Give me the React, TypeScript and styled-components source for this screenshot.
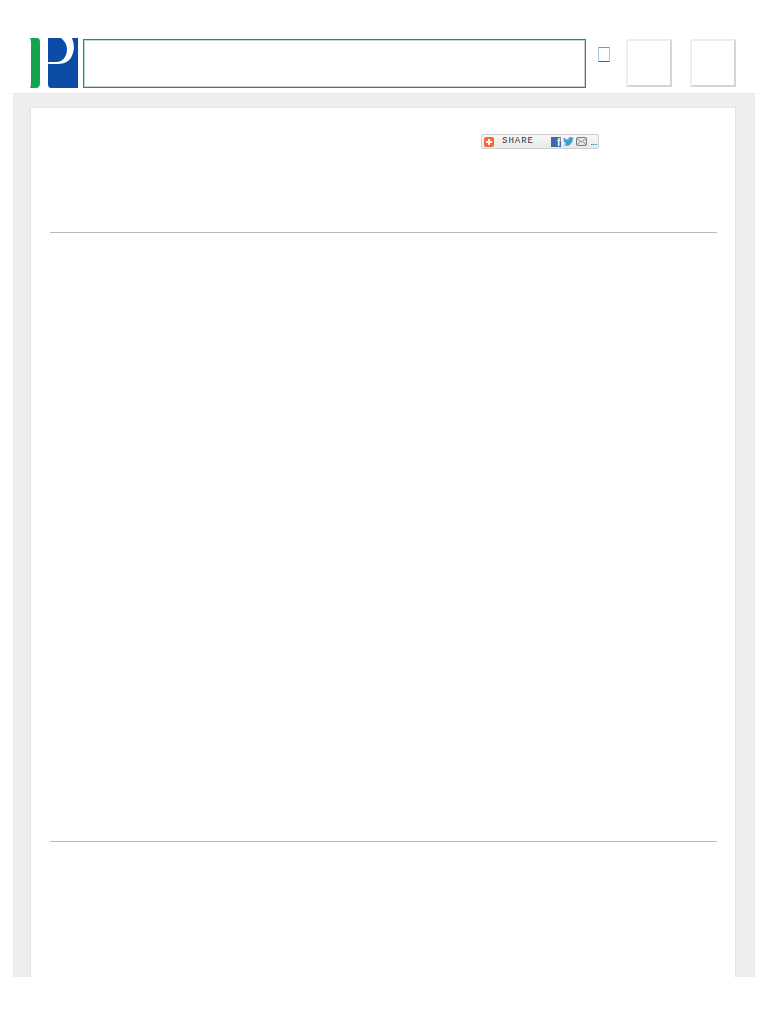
import React from 'react';
import styled, { createGlobalStyle } from 'styled-components';

const GlobalStyle = createGlobalStyle`
	html, body {
		margin: 0;
		padding: 0;
		background: #fff;
		font-family: 'Liberation Sans', Arial, sans-serif;
	}
`;

const App = () => (
	<Page>
		<GlobalStyle />
		<Header>
			<Logo viewBox="0 0 48 50" aria-label="logo">
				<path d="M0 0H7Q10 0 10 4V45Q10 50 6 50H0Q1 48 1 44V5Q1 2 0 0Z" fill="#14a44d" />
				<path d="M18 0H48V50H21Q18 50 18 46Z" fill="#0b4da6" />
				<path
					d="M31 0H42Q44 5 44 10Q43 19 38 23Q34 26 28 26H18.2V24H26Q32 24 35 19Q37.500 15 37 10Q36 4 31 0Z"
					fill="#fff"
				/>
			</Logo>
			<SearchBox />
			<SmallLink href="#" aria-label="link" />
			<IconButton />
			<IconButton />
		</Header>
		<Band>
			<Card>
				<ShareRow>
					<ShareButton>
						<PlusBadge>
							<svg width="8" height="8" viewBox="0 0 8 8">
								<path d="M3 1H5V3H7V5H5V7H3V5H1V3H3Z" fill="#fff" />
							</svg>
						</PlusBadge>
						<ShareLabel>SHARE</ShareLabel>
						<Services>
							<Facebook>f</Facebook>
							<svg width="11" height="9" viewBox="0 0 24 20">
								<path
									d="M24 2.400c-.9.4-1.800.7-2.800.8 1-.6 1.800-1.600 2.200-2.700-1 .6-2 1-3.100 1.200A4.900 4.900 0 0 0 11.900 6.200 14 14 0 0 1 1.700.9a4.900 4.900 0 0 0 1.500 6.600c-.8 0-1.600-.2-2.200-.6 0 2.400 1.700 4.400 3.900 4.900-.7.200-1.500.2-2.200.1.600 2 2.400 3.400 4.600 3.400A9.900 9.900 0 0 1 0 17.300 14 14 0 0 0 21.500 4.900c1-.7 1.900-1.500 2.500-2.500Z"
									fill="#3f9fd6"
								/>
							</svg>
							<svg width="11" height="9" viewBox="0 0 11 9">
								<rect x=".5" y=".5" width="10" height="8" rx="1" fill="#e4e4e4" stroke="#7d7d7d" />
								<path d="M1 1.500L5.500 5 10 1.500M1 8l3-3.500M10 8L7 4.500" fill="none" stroke="#8c8c8c" />
							</svg>
							<More>...</More>
						</Services>
					</ShareButton>
				</ShareRow>
				<TopRule />
				<BottomRule />
			</Card>
		</Band>
	</Page>
);

export default App;

// styles
const Page = styled.div`
	height: 1024px;
	overflow: hidden;
	padding-top: 38px;
	box-sizing: border-box;
`;

const Header = styled.header`
	display: flex;
	align-items: flex-start;
	height: 50px;
	padding-left: 30px;
`;

const Logo = styled.svg`
	display: block;
	flex: none;
	width: 48px;
	height: 50px;
`;

const SearchBox = styled.div`
	flex: none;
	box-sizing: border-box;
	width: 503px;
	height: 49px;
	margin: 1px 0 0 5px;
	background: #fff;
	border: 1px solid #0f9d47;
	box-shadow: inset 1px 1px 0 #b5e2c6, inset -1px -1px 0 #d2d2d2;
`;

const SmallLink = styled.a`
	flex: none;
	box-sizing: border-box;
	display: block;
	width: 12px;
	height: 15px;
	margin: 9px 16px 0 12px;
	border: 1px solid #a9c3ea;
	border-top-color: #6f96d8;
	border-bottom-color: #2b62c8;
`;

const IconButton = styled.button`
	flex: none;
	box-sizing: border-box;
	width: 46px;
	height: 48px;
	margin: 1px 18px 0 0;
	padding: 0;
	background: #fff;
	border: 2px solid #eeeeee;
	border-right-color: #d6d6d6;
	border-bottom-color: #d6d6d6;
`;

const Band = styled.main`
	box-sizing: border-box;
	width: 742px;
	height: 884px;
	margin: 5px 0 0 13px;
	padding: 14px 20px 0 18px;
	background: #eeeeee;
	border-top: 1px solid #e6e6e6;
`;

const Card = styled.section`
	box-sizing: border-box;
	height: 869px;
	padding: 26px 18px 0 19px;
	background: #fff;
	box-shadow: 0 -1px 0 #e6e6e6, 1px 0 0 #e4e4e4, -1px 0 0 #e4e4e4;
`;

const ShareRow = styled.div`
	display: flex;
	height: 15px;
	padding-left: 431px;
`;

const ShareButton = styled.div`
	box-sizing: border-box;
	display: flex;
	align-items: center;
	width: 118px;
	height: 15px;
	padding: 0 1px 0 2px;
	border: 1px solid #cfcfcf;
	border-radius: 2px;
	background: linear-gradient(#f7f7f7, #e9e9e9);
`;

const PlusBadge = styled.span`
	display: flex;
	align-items: center;
	justify-content: center;
	width: 10px;
	height: 10px;
	border-radius: 2px;
	background: #f0693a;
`;

const ShareLabel = styled.span`
	margin-left: 8px;
	white-space: nowrap;
	font-family: 'Liberation Mono', 'DejaVu Sans Mono', monospace;
	font-size: 9px;
	letter-spacing: 1px;
	line-height: 13px;
	color: #333;
`;

const Services = styled.div`
	display: flex;
	align-items: center;
	gap: 2px;
	margin-left: auto;
`;

const Facebook = styled.span`
	width: 10px;
	height: 10px;
	background: #3b6aa8;
	color: #fff;
	font-family: 'Liberation Sans', Arial, sans-serif;
	font-size: 10px;
	font-weight: 700;
	line-height: 11px;
	text-align: right;
	padding-right: 1px;
	box-sizing: border-box;
`;

const More = styled.span`
	margin-left: 1px;
	font-family: 'Liberation Sans', Arial, sans-serif;
	font-size: 9px;
	line-height: 12px;
	letter-spacing: -0.300px;
	color: #333;
	align-self: flex-end;
`;

const Rule = styled.hr`
	height: 1px;
	margin: 0;
	border: 0;
	background: #b9b9b9;
`;

const TopRule = styled(Rule)`
	margin-top: 83px;
`;

const BottomRule = styled(Rule)`
	margin-top: 608px;
`;
